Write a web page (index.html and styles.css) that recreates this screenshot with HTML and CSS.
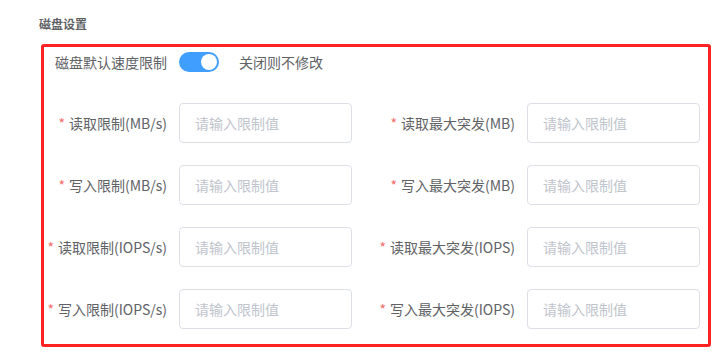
FILE: index.html
```html
<!DOCTYPE html>
<html lang="zh-CN">
<head>
  <meta charset="UTF-8">
  <title>磁盘设置</title>
  <link rel="stylesheet" href="styles.css">
</head>
<body>
  <div class="section-title">磁盘设置</div>
  <div class="disk-box">
    <!-- 默认限速开关 -->
    <div class="switch-row">
      <label class="form-label">磁盘默认速度限制</label>
      <span class="switch is-on"><span class="switch-knob"></span></span>
      <span class="switch-tip">关闭则不修改</span>
    </div>
    <!-- 限制项 -->
    <div class="limit-grid">
      <div class="form-item">
        <label class="form-label required">读取限制(MB/s)</label>
        <input class="form-input" type="text" placeholder="请输入限制值">
      </div>
      <div class="form-item">
        <label class="form-label required">读取最大突发(MB)</label>
        <input class="form-input" type="text" placeholder="请输入限制值">
      </div>
      <div class="form-item">
        <label class="form-label required">写入限制(MB/s)</label>
        <input class="form-input" type="text" placeholder="请输入限制值">
      </div>
      <div class="form-item">
        <label class="form-label required">写入最大突发(MB)</label>
        <input class="form-input" type="text" placeholder="请输入限制值">
      </div>
      <div class="form-item">
        <label class="form-label required">读取限制(IOPS/s)</label>
        <input class="form-input" type="text" placeholder="请输入限制值">
      </div>
      <div class="form-item">
        <label class="form-label required">读取最大突发(IOPS)</label>
        <input class="form-input" type="text" placeholder="请输入限制值">
      </div>
      <div class="form-item">
        <label class="form-label required">写入限制(IOPS/s)</label>
        <input class="form-input" type="text" placeholder="请输入限制值">
      </div>
      <div class="form-item">
        <label class="form-label required">写入最大突发(IOPS)</label>
        <input class="form-input" type="text" placeholder="请输入限制值">
      </div>
    </div>
  </div>
</body>
</html>
```

FILE: styles.css
```css
body {
  margin: 0;
  background: #fff;
  font-family: "Noto Sans CJK SC", "Noto Sans", sans-serif;
  color: #606266;
}
.section-title {
  font-size: 12px;
  font-weight: 600;
  color: #606266;
  line-height: 16px;
  padding: 16px 0 0 39px;
  height: 28px;
}
.disk-box {
  margin-left: 41px;
  width: 654px;
  height: 297px;
  border: 3px solid #ff2222;
  border-radius: 3px;
  padding: 0 0 0 10px;
}
.form-label {
  display: flex;
  justify-content: flex-end;
  white-space: nowrap;
  width: 125px;
  padding-right: 12px;
  box-sizing: border-box;
  font-size: 14px;
  line-height: 20px;
  color: #606266;
  flex-shrink: 0;
}
.required::before {
  content: "*";
  color: #f56c6c;
  margin-right: 4px;
}
.switch-row {
  display: flex;
  align-items: center;
  height: 30px;
}
.switch {
  position: relative;
  width: 40px;
  height: 20px;
  border-radius: 10px;
  background: #dcdfe6;
  flex-shrink: 0;
}
.switch.is-on {
  background: #409eff;
}
.switch-knob {
  position: absolute;
  top: 2px;
  left: 2px;
  width: 16px;
  height: 16px;
  border-radius: 50%;
  background: #fff;
}
.switch.is-on .switch-knob {
  left: 22px;
}
.switch-tip {
  margin-left: 20px;
  font-size: 14px;
  color: #606266;
}
.limit-grid {
  display: grid;
  grid-template-columns: 298px 298px;
  column-gap: 50px;
  row-gap: 22px;
  margin-top: 26px;
}
.form-item {
  display: flex;
  align-items: center;
  height: 40px;
}
.form-input {
  width: 173px;
  height: 40px;
  box-sizing: border-box;
  border: 1px solid #dcdfe6;
  border-radius: 4px;
  padding: 0 15px;
  font-family: inherit;
  font-size: 14px;
  color: #606266;
  outline: none;
}
.form-input::placeholder {
  color: #c0c4cc;
}
```
